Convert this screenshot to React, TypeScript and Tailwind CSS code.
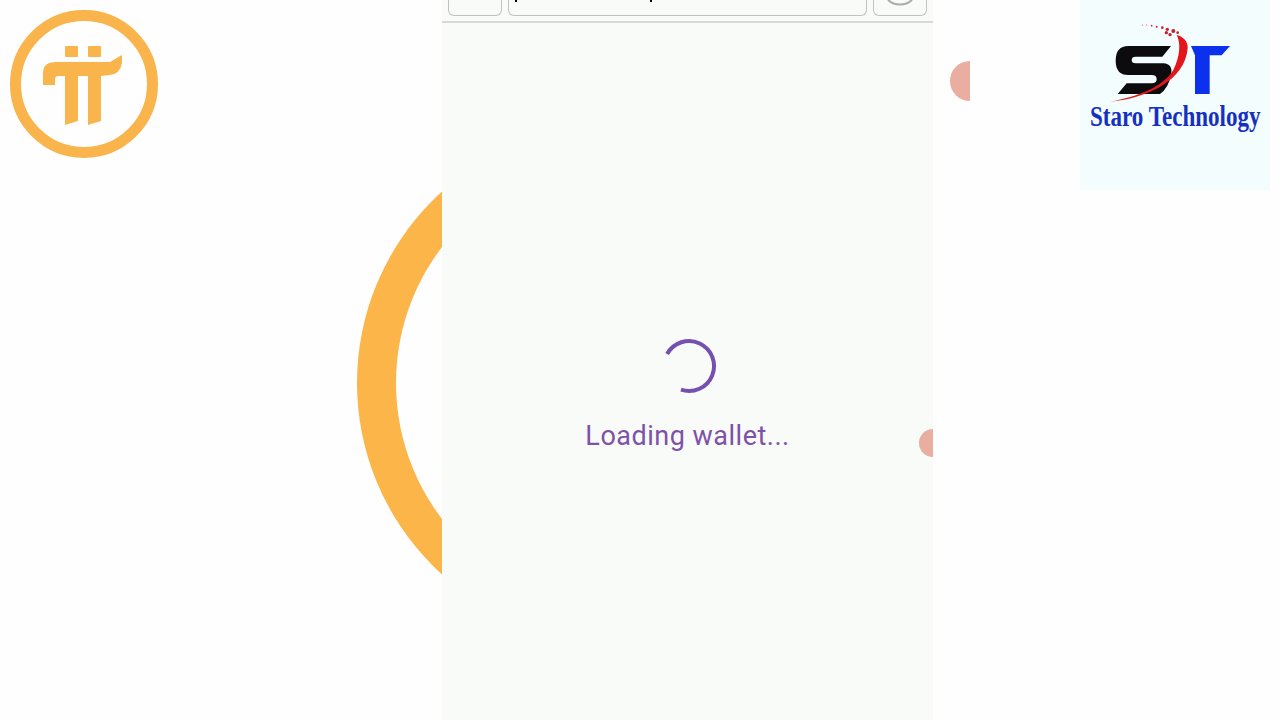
import React from "react";

function PiLogo() {
  return (
    <svg viewBox="0 0 170 170" className="w-[170px] h-[170px]">
      <circle cx="84" cy="84" r="68.5" fill="none" stroke="#f9b44b" strokeWidth="11" />
      <rect x="65" y="46" width="13" height="11" rx="1" fill="#f9b44b" />
      <rect x="88" y="46" width="13" height="11" rx="1" fill="#f9b44b" />
      <path
        d="M43 85 V73 Q43 62 56 62 H110 L122 55 V63 Q120 74 110 75 L101 76 V121 L88 125 V76 H78 V121 L65 125 V76 H58 Q55 76 55 80 V85 Z"
        fill="#f9b44b"
      />
    </svg>
  );
}

function StMark() {
  return (
    <svg viewBox="0 0 390 255" className="w-[130px] h-[85px]">
      <path
        d="M198 78 L172 110 H92 Q80 110 80 120 Q80 130 92 130 H175 Q205 132 198 165 Q190 205 165 222 H38 L65 190 H140 Q155 190 155 178 Q155 165 140 165 H70 Q32 165 32 122 Q32 78 70 78 Z"
        fill="#0c0c0e"
      />
      <path
        d="M15 245 C130 235 240 180 248 85 C250 65 235 50 215 45 C228 70 225 110 205 150 C175 200 100 230 15 245 Z"
        fill="#e3161c"
      />
      <g fill="#c8202c">
        <circle cx="112" cy="15" r="1.5" />
        <circle cx="125" cy="15" r="1.5" />
        <circle cx="140" cy="17" r="2.5" />
        <circle cx="155" cy="20" r="3" />
        <circle cx="172" cy="23" r="4" />
        <circle cx="187" cy="28" r="5" />
        <circle cx="205" cy="33" r="6" />
        <circle cx="218" cy="38" r="4" />
        <circle cx="184" cy="38" r="5" />
        <circle cx="195" cy="44" r="5" />
      </g>
      <path d="M258 78 H375 L350 106 H314 V222 H270 V106 Z" fill="#0b30ee" />
    </svg>
  );
}

export default function App() {
  return (
    <div className="relative flex w-[1280px] h-[720px] overflow-hidden bg-[#fefefe] font-['Roboto',sans-serif]">
      {/* Left column: Pi logo + big ring */}
      <div className="relative w-[442px] shrink-0">
        <PiLogo />
        <svg viewBox="340 170 102 430" className="absolute left-[340px] top-[170px] w-[102px] h-[430px]">
          <circle cx="615" cy="383" r="258" fill="#fbb549" />
          <circle cx="620" cy="383" r="224" fill="#fefefe" />
        </svg>
      </div>

      {/* Phone screen */}
      <div className="relative w-[491px] shrink-0 bg-[#f8fbf8] flex flex-col items-center overflow-hidden">
        <div className="flex w-full h-[23px] gap-[6px] px-[6px] border-b-2 border-[#d6dad5]">
          <div className="w-[54px] h-[16px] border-x border-b border-[#bfc3be] rounded-b-md"></div>
          <div className="relative w-[360px] h-[16px] border-x border-b border-[#bfc3be] rounded-b-md">
            <div className="absolute left-[6px] top-0 w-[2px] h-[2px] bg-black"></div>
            <div className="absolute left-[141px] top-0 w-[2px] h-[2px] bg-black"></div>
          </div>
          <div className="w-[54px] h-[16px] border-x border-b border-[#bfc3be] rounded-b-md flex justify-center">
            <svg viewBox="0 0 30 6" className="w-[30px] h-[6px]">
              <path d="M3 0 A18 18 0 0 0 27 0" fill="none" stroke="#a9aca8" strokeWidth="2" />
            </svg>
          </div>
        </div>

        <svg viewBox="0 0 56 56" className="w-14 h-14 mt-[315px] ml-[2px]">
          <path d="M6.1 16 A25 25 0 1 1 20 51.7" fill="none" stroke="#7650b0" strokeWidth="4" />
        </svg>
        <p className="mt-[26px] text-[27px] leading-8 tracking-[0.5px] text-[#7f52a8]">Loading wallet...</p>

        <div className="absolute left-[477px] top-[429px] w-7 h-7 rounded-full bg-[#e9ae9f]"></div>
      </div>

      {/* Right column: dot + Staro logo */}
      <div className="relative flex-1 flex justify-end pr-[10px]">
        <div className="absolute left-[17px] top-[61px] w-5 h-10 rounded-l-full bg-[#e9ae9f]"></div>
        <div className="w-[190px] h-[190px] bg-[#f3fdfe] pl-[25px] pt-[20px]">
          <StMark />
          <p className="-ml-[15px] -mt-[3px] w-[170px] whitespace-nowrap text-[29px] leading-[28px] font-bold text-[#1630c0] origin-left scale-x-[0.795] font-['Liberation_Serif',serif]">
            Staro Technology
          </p>
        </div>
      </div>
    </div>
  );
}
